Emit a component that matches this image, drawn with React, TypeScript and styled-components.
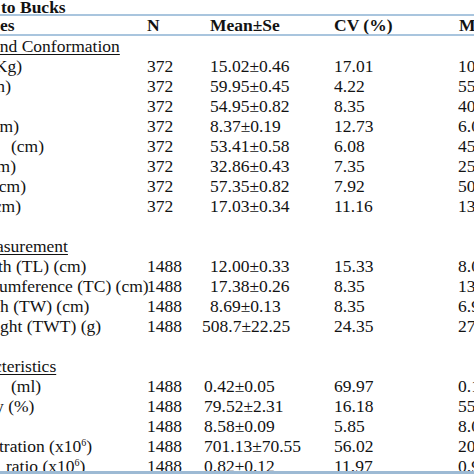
import React from "react";
import styled, { createGlobalStyle } from "styled-components";

const GlobalStyle = createGlobalStyle`
  html, body {
    margin: 0;
    padding: 0;
    background: #ffffff;
    overflow: hidden;
  }
  body {
    width: 474px;
    height: 474px;
    font-family: "Liberation Serif", "Times New Roman", serif;
    color: #121212;
  }
`;

const Sheet = styled.div`
  width: 560px;
  font-size: 17.5px;
`;

const TitleRow = styled.div`
  height: 14px;
  line-height: 14px;
  font-weight: 700;
  white-space: nowrap;
  border-bottom: 2px solid #a9c5de;
`;

const HeaderRow = styled.div`
  display: grid;
  grid-template-columns: 147px 63px 124px 124px 102px;
  height: 18px;
  line-height: 18px;
  font-weight: 700;
  white-space: nowrap;
  border-bottom: 2px solid #a9c5de;
`;

const Body = styled.div`
  height: 435px;
  overflow: hidden;
  border-bottom: 3px solid #9dbad4;
`;

const Row = styled.div`
  display: grid;
  grid-template-columns: 147px 63px 124px 124px 102px;
  height: 20px;
  line-height: 20px;
  white-space: nowrap;
`;

const Cell = styled.span<{ $dx?: number }>`
  display: block;
  margin-left: ${(p) => p.$dx ?? 0}px;
  overflow: visible;
`;

const Group = styled.span<{ $dx?: number }>`
  display: inline-block;
  margin-left: ${(p) => p.$dx ?? 0}px;
  text-decoration: underline;
  text-decoration-thickness: 1px;
  text-underline-offset: 2px;
`;

const Sup = styled.sup`
  font-size: 10px;
  line-height: 0;
  vertical-align: 6px;
`;

type Data = {
  kind: "data";
  label: React.ReactNode;
  dx: number;
  n: string;
  mean: string;
  meanDx?: number;
  cv: string;
  min: string;
};
type Line = Data | { kind: "group"; label: string; dx: number } | { kind: "blank" };

const x106 = (
  <>
    (x10<Sup>6</Sup>)
  </>
);

const lines: Line[] = [
  { kind: "group", label: "and Conformation", dx: -8 },
  { kind: "data", label: "(Kg)", dx: -11, n: "372", mean: "15.02±0.46", cv: "17.01", min: "10.50" },
  { kind: "data", label: "(cm)", dx: -22, n: "372", mean: "59.95±0.45", cv: "4.22", min: "55.00" },
  { kind: "data", label: "", dx: 0, n: "372", mean: "54.95±0.82", cv: "8.35", min: "40.00" },
  { kind: "data", label: "(cm)", dx: -14, n: "372", mean: "8.37±0.19", cv: "12.73", min: "6.00" },
  { kind: "data", label: "(cm)", dx: 11, n: "372", mean: "53.41±0.58", cv: "6.08", min: "45.00" },
  { kind: "data", label: "(cm)", dx: -17, n: "372", mean: "32.86±0.43", cv: "7.35", min: "25.00" },
  { kind: "data", label: "(cm)", dx: -7, n: "372", mean: "57.35±0.82", cv: "7.92", min: "50.00" },
  { kind: "data", label: "(cm)", dx: -12, n: "372", mean: "17.03±0.34", cv: "11.16", min: "13.00" },
  { kind: "blank" },
  { kind: "group", label: "asurement", dx: -4 },
  { kind: "data", label: "th (TL) (cm)", dx: -2, n: "1488", mean: "12.00±0.33", cv: "15.33", min: "8.00" },
  { kind: "data", label: "umference (TC) (cm)", dx: -1, n: "1488", mean: "17.38±0.26", cv: "8.35", min: "13.00" },
  { kind: "data", label: "h (TW) (cm)", dx: 0, n: "1488", mean: "8.69±0.13", cv: "8.35", min: "6.90" },
  { kind: "data", label: "ght (TWT) (g)", dx: 0, n: "1488", mean: "508.7±22.25", meanDx: -8, cv: "24.35", min: "270.0" },
  { kind: "blank" },
  { kind: "group", label: "cteristics", dx: -6 },
  { kind: "data", label: "(ml)", dx: 11, n: "1488", mean: "0.42±0.05", meanDx: -6, cv: "69.97", min: "0.10" },
  { kind: "data", label: "y (%)", dx: -5, n: "1488", mean: "79.52±2.31", meanDx: -6, cv: "16.18", min: "55.00" },
  { kind: "data", label: "", dx: 0, n: "1488", mean: "8.58±0.09", meanDx: -6, cv: "5.85", min: "8.00" },
  { kind: "data", label: <>tration {x106}</>, dx: -1, n: "1488", mean: "701.13±70.55", meanDx: -6, cv: "56.02", min: "200.0" },
  { kind: "data", label: <>ratio {x106}</>, dx: 6, n: "1488", mean: "0.82±0.12", meanDx: -6, cv: "11.97", min: "0.90" },
];

export default function App() {
  return (
    <Sheet>
      <GlobalStyle />
      <TitleRow>
        <Cell $dx={1}>to Bucks</Cell>
      </TitleRow>
      <HeaderRow>
        <Cell>es</Cell>
        <Cell>N</Cell>
        <Cell>Mean±Se</Cell>
        <Cell>CV (%)</Cell>
        <Cell $dx={1}>Min</Cell>
      </HeaderRow>
      <Body>
        {lines.map((l, i) => {
          if (l.kind === "blank") return <Row key={i} />;
          if (l.kind === "group")
            return (
              <Row key={i}>
                <Cell>
                  <Group $dx={l.dx}>{l.label}</Group>
                </Cell>
              </Row>
            );
          return (
            <Row key={i}>
              <Cell $dx={l.dx}>{l.label}</Cell>
              <Cell>{l.n}</Cell>
              <Cell $dx={l.meanDx}>{l.mean}</Cell>
              <Cell>{l.cv}</Cell>
              <Cell>{l.min}</Cell>
            </Row>
          );
        })}
      </Body>
    </Sheet>
  );
}
